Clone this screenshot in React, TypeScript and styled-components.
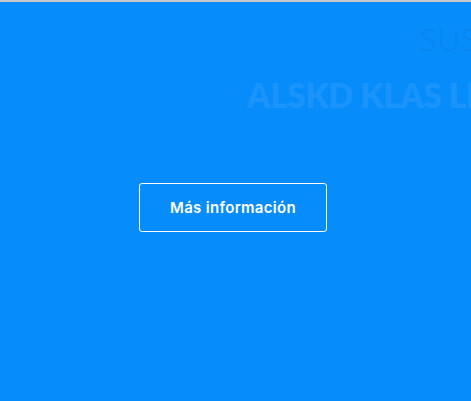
import React from "react";
import styled, { createGlobalStyle } from "styled-components";

const Global = createGlobalStyle`
  html, body { margin: 0; padding: 0; background: #068cfb; }
  body { font-family: "Inter", "Liberation Sans", sans-serif; }
`;

const Page = styled.div`
  width: 471px;
  height: 401px;
  box-sizing: border-box;
  border-top: 2px solid #c9c9c9;
  background: #068cfb;
  overflow: hidden;
  display: flex;
  flex-direction: column;
`;

const Hero = styled.div`
  display: flex;
  flex-direction: column;
  overflow: hidden;
`;

const Line = styled.div<{ $left: number; $top: number; $size: number; $weight: number; $color: string; $spacing: number }>`
  padding-left: ${(p) => p.$left}px;
  margin-top: ${(p) => p.$top}px;
  font-family: "Lato", "Open Sans", sans-serif;
  font-size: ${(p) => p.$size}px;
  font-weight: ${(p) => p.$weight};
  color: ${(p) => p.$color};
  line-height: 1;
  white-space: nowrap;
  letter-spacing: ${(p) => p.$spacing}px;
`;

const ButtonRow = styled.div`
  padding-left: 139px;
  margin-top: 71px;
`;

const Button = styled.button`
  width: 188px;
  height: 49px;
  box-sizing: border-box;
  border: 1px solid #ffffff;
  border-radius: 3px;
  background: transparent;
  color: #ffffff;
  font-family: "Inter", "Liberation Sans", sans-serif;
  font-size: 15px;
  font-weight: 600;
  letter-spacing: 0.3px;
  padding: 0;
  cursor: pointer;
`;

export default function App() {
  return (
    <>
      <Global />
      <Page>
        <Hero>
          <Line $left={420} $top={22} $size={31} $weight={300} $color="#0a84ec" $spacing={1}>
            SUSCRÍBETE
          </Line>
          <Line $left={247} $top={24} $size={33} $weight={800} $color="#1a93fb" $spacing={-0.3}>
            ALSKD KLAS LIKSD
          </Line>
        </Hero>
        <ButtonRow>
          <Button>Más información</Button>
        </ButtonRow>
      </Page>
    </>
  );
}
